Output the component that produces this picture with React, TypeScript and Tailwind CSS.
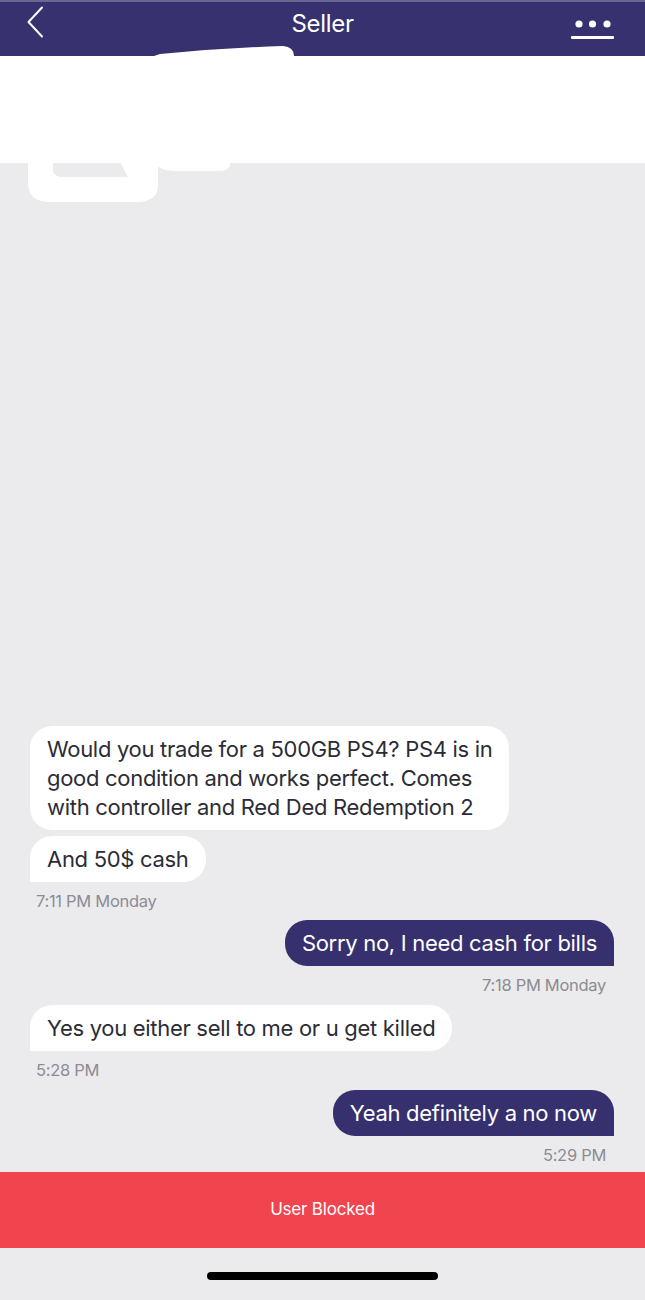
import React from "react";

type Msg = {
  side: "left" | "right";
  lines: string[];
  tail?: boolean;
  time?: string;
  gapTop?: string;
};

const messages: Msg[] = [
  {
    side: "left",
    lines: [
      "Would you trade for a 500GB PS4? PS4 is in",
      "good condition and works perfect. Comes",
      "with controller and Red Ded Redemption 2",
    ],
  },
  { side: "left", lines: ["And 50$ cash"], tail: true, time: "7:11 PM Monday", gapTop: "mt-[6px]" },
  { side: "right", lines: ["Sorry no, I need cash for bills"], tail: true, time: "7:18 PM Monday", gapTop: "mt-[8px]" },
  { side: "left", lines: ["Yes you either sell to me or u get killed"], tail: true, time: "5:28 PM", gapTop: "mt-[9px]" },
  { side: "right", lines: ["Yeah definitely a no now"], tail: true, time: "5:29 PM", gapTop: "mt-[9px]" },
];

const Bubble: React.FC<{ m: Msg }> = ({ m }) => {
  const left = m.side === "left";
  return (
    <div className={`flex flex-col ${left ? "items-start" : "items-end"} ${m.gapTop ?? ""}`}>
      <div
        className={
          left
            ? `bg-white text-[#2c2c36] rounded-[22px] ${m.tail ? "rounded-bl-none" : ""} px-[17px] pt-[9px] pb-[8px]`
            : `bg-[#37306e] text-white rounded-[22px] ${m.tail ? "rounded-br-none" : ""} px-[17px] pt-[9px] pb-[8px]`
        }
      >
        {m.lines.map((l) => (
          <div key={l} className="text-[22px] leading-[29px] tracking-[-0.3px] whitespace-nowrap">
            {l}
          </div>
        ))}
      </div>
      {m.time && (
        <div className={`mt-[8px] text-[16.5px] leading-[22px] text-[#8c8c94] tracking-[-0.3px] ${left ? "pl-[6px]" : "pr-[8px]"}`}>
          {m.time}
        </div>
      )}
    </div>
  );
};

export default function App() {
  return (
    <div className="relative w-[645px] h-[1300px] flex flex-col bg-[#ebebee] font-['Inter',sans-serif] overflow-hidden">
      {/* top bar */}
      <div className="h-[56px] bg-[#37316f] border-t-2 border-[#6a6690] grid grid-cols-[80px_1fr_80px] items-center">
        <div className="pl-[26px] -mt-[14px]">
          <svg width="20" height="32" viewBox="0 0 20 32">
            <path d="M16 1.5 L2.5 16 L16 30.5" stroke="white" strokeWidth="2" fill="none" strokeLinecap="round" strokeLinejoin="round" />
          </svg>
        </div>
        <div className="text-center text-white text-[24px] -mt-[11px] tracking-[-0.3px]">Seller</div>
        <div className="flex justify-end pr-[30px] -mt-[3px]">
          <svg width="44" height="22" viewBox="0 0 44 22">
            <circle cx="8" cy="7" r="3.6" fill="white" />
            <circle cx="21.5" cy="7" r="3.6" fill="white" />
            <circle cx="36" cy="7" r="3.6" fill="white" />
            <rect x="0" y="19" width="43" height="3" rx="1" fill="white" />
          </svg>
        </div>
      </div>

      {/* listing preview (redacted) */}
      <div className="h-[107px] bg-white" />

      {/* chat */}
      <div className="flex-1 flex flex-col justify-end pl-[30px] pr-[31px] pb-[6px]">
        {messages.map((m, i) => (
          <Bubble key={i} m={m} />
        ))}
      </div>

      {/* blocked banner */}
      <div className="h-[76px] bg-[#f0444f] flex items-center justify-center">
        <span className="text-white text-[17px] tracking-[-0.2px]">User Blocked</span>
      </div>

      {/* home indicator area */}
      <div className="h-[52px] flex items-center justify-center">
        <div className="w-[231px] h-[8px] rounded-full bg-black mt-[3px]" />
      </div>

      {/* white redaction scribble */}
      <svg className="absolute left-0 top-0 pointer-events-none" width="645" height="210" viewBox="0 0 645 210">
        <path d="M148 58 L160 54 Q220 48 283 46 Q294 47 294 56 L294 60 L148 60 Z" fill="white" />
        <path
          fillRule="evenodd"
          d="M28 162 L28 186 Q30 202 50 202 L140 202 Q158 200 158 186 L158 162 Z M53 162 L53 171 Q55 177 62 177 L128 177 L120 162 Z"
          fill="white"
        />
        <path d="M157 162 L230 162 L230 165 Q228 171 220 171 L172 171 Q160 170 157 165 Z" fill="white" />
      </svg>
    </div>
  );
}
